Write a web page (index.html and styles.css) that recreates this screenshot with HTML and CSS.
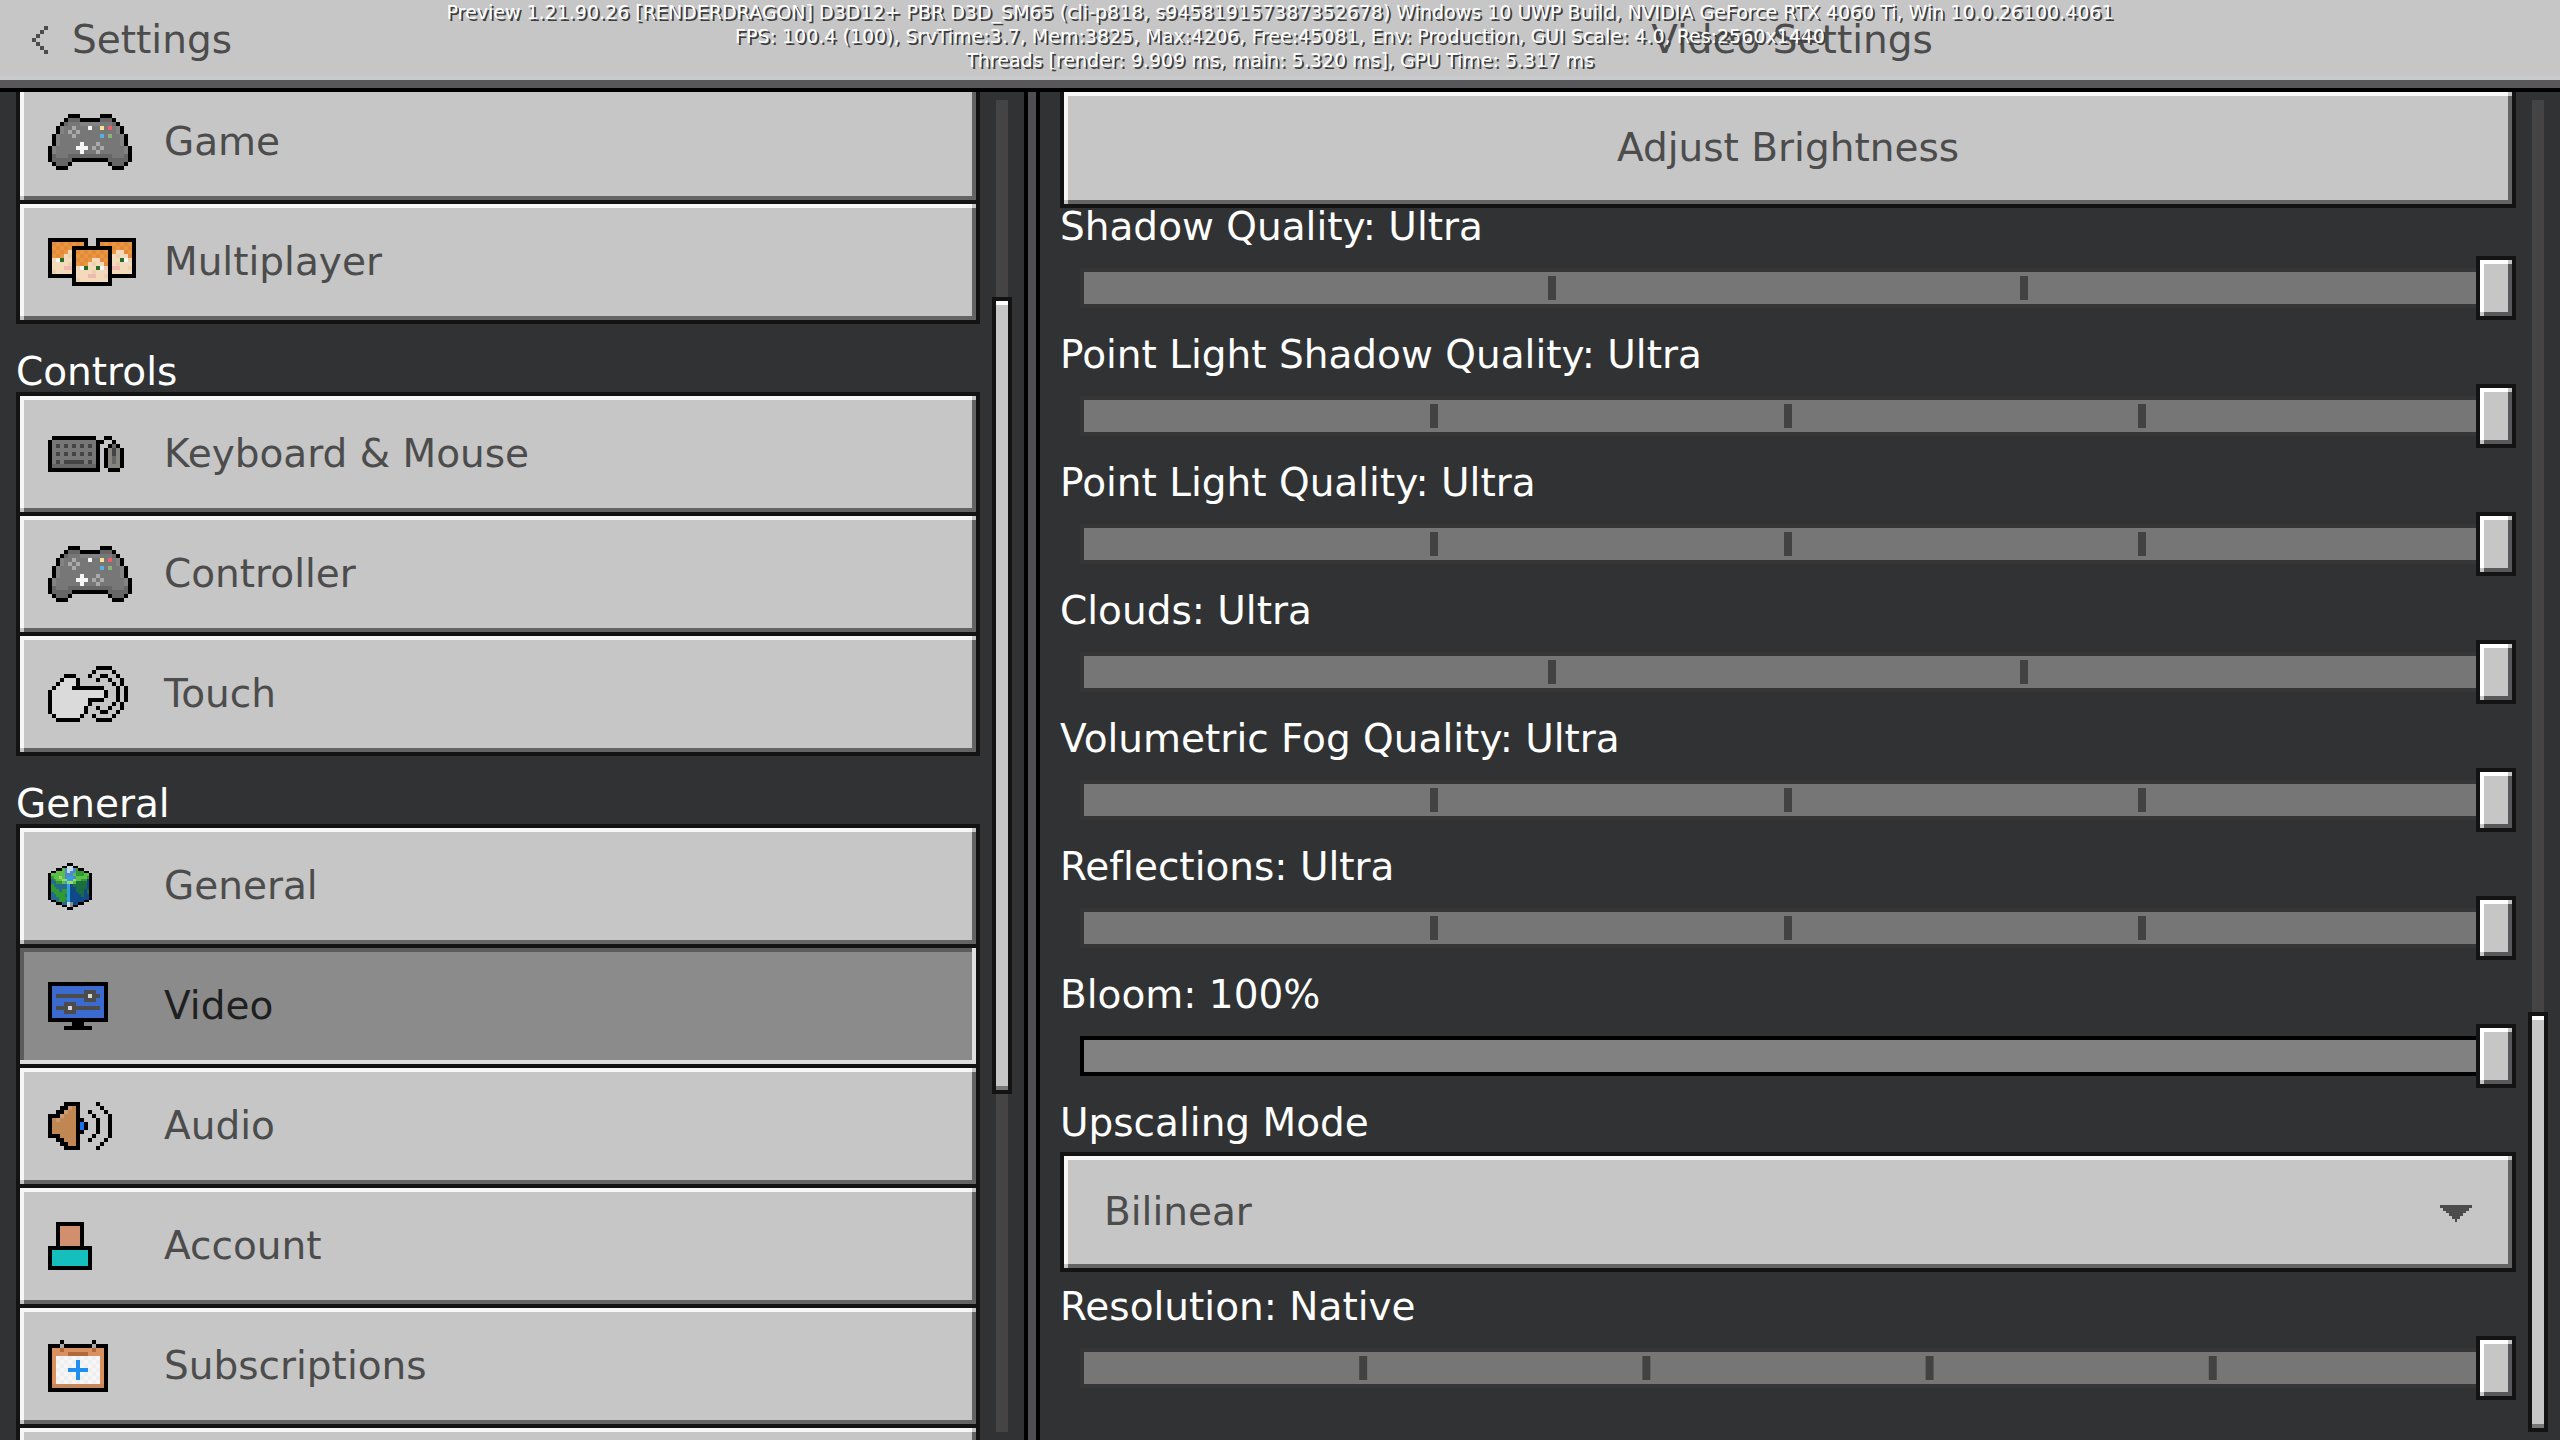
FILE: index.html
```html
<!DOCTYPE html>
<html lang="en">
<head>
    <meta charset="UTF-8">
    <meta name="viewport" content="width=device-width, initial-scale=1.0">
    <title>Video Settings</title>
    <link rel="stylesheet" href="styles.css">
</head>
<body>

    <header class="header">
        <button class="back">
            <svg class="icon" data-icon="back"></svg>
            Settings
        </button>
        <h1 class="title">Video Settings</h1>
    </header>

    <div class="debug">
        <p>Preview 1.21.90.26 [RENDERDRAGON] D3D12+ PBR D3D_SM65 (cli-p818, s945819157387352678) Windows 10 UWP Build, NVIDIA GeForce RTX 4060 Ti, Win 10.0.26100.4061</p>
        <p>FPS: 100.4 (100), SrvTime:3.7, Mem:3825, Max:4206, Free:45081, Env: Production, GUI Scale: 4.0, Res:2560x1440</p>
        <p>Threads [render: 9.909 ms, main: 5.320 ms], GPU Time: 5.317 ms</p>
    </div>

    <main class="main">
        <div class="panel panel-left">
            <nav class="list">
                <button class="item"><svg class="icon" data-icon="gamepad"></svg>Game</button>
                <button class="item"><svg class="icon" data-icon="players"></svg>Multiplayer</button>

                <h2 class="group">Controls</h2>
                <button class="item"><svg class="icon" data-icon="keyboard"></svg>Keyboard &amp; Mouse</button>
                <button class="item"><svg class="icon" data-icon="gamepad"></svg>Controller</button>
                <button class="item"><svg class="icon" data-icon="touch"></svg>Touch</button>

                <h2 class="group">General</h2>
                <button class="item"><svg class="icon" data-icon="globe"></svg>General</button>
                <button class="item selected" aria-current="page"><svg class="icon" data-icon="monitor"></svg>Video</button>
                <button class="item"><svg class="icon" data-icon="speaker"></svg>Audio</button>
                <button class="item"><svg class="icon" data-icon="account"></svg>Account</button>
                <button class="item"><svg class="icon" data-icon="calendar"></svg>Subscriptions</button>
                <button class="item" aria-label="Global Resources"></button>
            </nav>
            <div class="scrollbar"><div class="thumb"></div></div>
        </div>

        <div class="divider"></div>

        <div class="panel panel-right">
            <form class="options">
                <button type="button" class="wide">Adjust Brightness</button>

                <div class="option">
                    <label for="shadow">Shadow Quality: Ultra</label>
                    <div class="slider steps-3"><input type="range" id="shadow" min="0" max="3" value="3"></div>
                </div>
                <div class="option">
                    <label for="point-shadow">Point Light Shadow Quality: Ultra</label>
                    <div class="slider steps-4"><input type="range" id="point-shadow" min="0" max="4" value="4"></div>
                </div>
                <div class="option">
                    <label for="point-light">Point Light Quality: Ultra</label>
                    <div class="slider steps-4"><input type="range" id="point-light" min="0" max="4" value="4"></div>
                </div>
                <div class="option">
                    <label for="clouds">Clouds: Ultra</label>
                    <div class="slider steps-3"><input type="range" id="clouds" min="0" max="3" value="3"></div>
                </div>
                <div class="option">
                    <label for="fog">Volumetric Fog Quality: Ultra</label>
                    <div class="slider steps-4"><input type="range" id="fog" min="0" max="4" value="4"></div>
                </div>
                <div class="option">
                    <label for="reflections">Reflections: Ultra</label>
                    <div class="slider steps-4"><input type="range" id="reflections" min="0" max="4" value="4"></div>
                </div>
                <div class="option">
                    <label for="bloom">Bloom: 100%</label>
                    <div class="slider smooth"><input type="range" id="bloom" min="0" max="100" value="100"></div>
                </div>
                <div class="option">
                    <label for="upscaling">Upscaling Mode</label>
                    <div class="dropdown">
                        <select id="upscaling">
                            <option>Bilinear</option>
                            <option>TAAU</option>
                        </select>
                        <svg class="arrow" viewBox="0 0 32 17" shape-rendering="crispEdges">
                            <path d="M0 0h32v3h-3v3h-3v2h-3v3h-3v3h-3v3h-2v-3h-3v-3h-3v-3h-3v-2h-3v-3h-3z"/>
                        </svg>
                    </div>
                </div>
                <div class="option">
                    <label for="resolution">Resolution: Native</label>
                    <div class="slider steps-5"><input type="range" id="resolution" min="0" max="5" value="5"></div>
                </div>
            </form>
            <div class="scrollbar"><div class="thumb"></div></div>
        </div>
    </main>

    <script src="icons.js"></script>
</body>
</html>
```
FILE: styles.css
```css
* {
    box-sizing: border-box;
}

body {
    margin: 0;
    height: 100vh;
    display: flex;
    flex-direction: column;
    overflow: hidden;
    background: #313233;
    color: #ffffff;
    font-family: "DejaVu Sans", Verdana, sans-serif;
    font-size: 39px;
    font-variant-ligatures: none;
    line-height: 40px;
}

button,
select {
    font: inherit;
    color: #4c4c4c;
    border-radius: 0;
    cursor: pointer;
}

h1,
h2,
p {
    margin: 0;
    font-size: inherit;
    font-weight: normal;
}

/* header */

.header {
    position: relative;
    z-index: 1;
    flex: none;
    display: grid;
    grid-template-columns: 40% 1fr;
    align-items: center;
    height: 92px;
    background: #c6c6c6;
    border-bottom: 4px solid #000000;
    box-shadow: inset 0 -8px #58585a, inset 0 -12px #c8cacb;
    color: #4c4c4c;
    padding-bottom: 8px;
}

.back {
    display: flex;
    align-items: center;
    gap: 24px;
    padding: 0 32px;
    background: none;
    border: none;
}

.title {
    text-align: center;
}

.debug {
    position: absolute;
    z-index: 2;
    top: 0;
    left: 0;
    right: 0;
    text-align: center;
    font-size: 19px;
    line-height: 24px;
    white-space: nowrap;
    text-shadow: 2px 2px #3d3d3d;
    pointer-events: none;
}

/* panels */

.main {
    flex: 1;
    min-height: 0;
    display: flex;
    overflow: hidden;
    margin-top: -12px;
    padding-top: 12px;
}

.panel {
    display: flex;
    gap: 12px;
    min-width: 0;
    padding-right: 12px;
}

.panel-left {
    width: 40%;
    padding-left: 16px;
}

.panel-right {
    flex: 1;
    padding-left: 20px;
}

.divider {
    flex: none;
    width: 16px;
    background: #4f4f51;
    border: solid #000000;
    border-width: 0 4px;
}

.scrollbar {
    position: relative;
    flex: none;
    width: 12px;
    margin: 8px 4px;
    background: #444444;
}

.scrollbar .thumb {
    position: absolute;
    left: -4px;
    right: -4px;
    background: #c6c6c6;
    border: 4px solid #131313;
    box-shadow: inset 0 4px #ffffff, inset 0 -4px #777777;
}

.panel-left .thumb {
    top: 14.8%;
    height: 59.8%;
}

.panel-right .thumb {
    top: 68.5%;
    bottom: 0;
}

/* raised surfaces */

.item,
.wide,
.dropdown select,
.slider input::-webkit-slider-thumb {
    --face: #c6c6c6;
    --corner: #c6c6c6;
    --light: #f7f7f7;
    --dark: #646464;
    border: 4px solid #131313;
    background:
        linear-gradient(var(--corner), var(--corner)) 100% 0 / 4px 4px no-repeat,
        linear-gradient(var(--corner), var(--corner)) 0 100% / 4px 4px no-repeat,
        linear-gradient(var(--light), var(--light)) 0 0 / 100% 4px no-repeat,
        linear-gradient(var(--light), var(--light)) 0 0 / 4px 100% no-repeat,
        linear-gradient(var(--dark), var(--dark)) 0 100% / 100% 4px no-repeat,
        linear-gradient(var(--dark), var(--dark)) 100% 0 / 4px 100% no-repeat,
        var(--face);
}

/* left list */

.list {
    flex: 1;
    min-width: 0;
    margin-top: -12px;
}

.item {
    display: grid;
    grid-template-columns: 116px 1fr;
    align-items: center;
    width: 100%;
    height: 124px;
    padding: 0 28px;
    text-align: left;
}

.item + .item {
    margin-top: -4px;
}

.item.selected {
    --face: #8b8b8b;
    --corner: #dfdfdf;
    --light: #5c5c5c;
    --dark: #dfdfdf;
    color: #1f1f1f;
}

.group {
    padding-top: 28px;
}

.icon {
    flex: none;
    display: block;
}

/* right list */

.options {
    flex: 1;
    min-width: 0;
    margin-top: -4px;
}

.wide {
    display: block;
    width: 100%;
    height: 120px;
}

.option {
    margin-bottom: 16px;
}

.option label {
    display: block;
    line-height: 38px;
    margin-bottom: 10px;
}

.slider {
    position: relative;
    height: 64px;
}

/* the half ticks at both ends stay under the border */
.slider::before {
    content: "";
    position: absolute;
    inset: 12px 20px;
    border: 4px solid #363636;
    background-color: #767676;
    background-image: linear-gradient(90deg, #424242 4px, transparent 4px, transparent calc(100% - 4px), #424242 calc(100% - 4px));
    background-origin: border-box;
    background-repeat: repeat-x;
    background-position: 0 50%;
}

.steps-3::before {
    background-size: calc(100% / 3) 24px;
}

.steps-4::before {
    background-size: calc(100% / 4) 24px;
}

.steps-5::before {
    background-size: calc(100% / 5) 24px;
}

.smooth::before {
    border-color: #000000;
    background: #818181;
}

.slider input {
    position: relative;
    display: block;
    width: 100%;
    height: 64px;
    margin: 0;
    appearance: none;
    background: none;
    cursor: pointer;
}

.slider input::-webkit-slider-thumb {
    --light: #ffffff;
    --dark: #58585a;
    appearance: none;
    width: 40px;
    height: 64px;
}

.dropdown {
    position: relative;
}

.dropdown select {
    display: block;
    width: 100%;
    height: 120px;
    padding: 0 40px;
    appearance: none;
}

.dropdown .arrow {
    position: absolute;
    right: 44px;
    top: 53px;
    width: 32px;
    height: 17px;
    fill: #4c4c4c;
    pointer-events: none;
}
```
FILE: icons.js
```javascript
// one character is one texture pixel, "." is empty
const colors = {
    k: "#000000", g: "#777777", d: "#666666", l: "#848284", x: "#a9a9a9",
    w: "#f6f6f6", y: "#f5e58c", r: "#ee5f73", b: "#58aee6", n: "#8fb27c",
    a: "#444444", m: "#85847e", f: "#dadada", q: "#4c4c4c", B: "#3b6bce",
    W: "#d6d6d6", C: "#1a72f0", h: "#c08752", H: "#cc9a72", t: "#ecd0b0",
    s: "#f2dabb", o: "#e38b3a", O: "#e8963f", e: "#266b26", p: "#efb9ae",
    A: "#d18f6f", T: "#15bfbd", c: "#d9925f", v: "#b0693a", i: "#1f8ff2",
    j: "#efefef", z: "#c6875f"
};

const globeColors = {
    k: "#000000", G: "#5cc046", L: "#9fd86a", n: "#2f9a2f", b: "#4f87d6",
    c: "#2fa2dc", S: "#c5dcdc", x: "#8a8a8a", u: "#27698f", v: "#10498a",
    D: "#1c6c42"
};

const icons = {
    back: [
        "...q",
        "..q.",
        ".q..",
        "q...",
        ".q..",
        "..q.",
        "...q"
    ],
    gamepad: [
        ".....kkk.....kkk.....",
        "....kdddkkkkkdddk....",
        "...kdggglllllgggdk...",
        "..klggxgggwggygrglk..",
        "..klgxgxggggggggglk..",
        ".klgggxggggggbgngglk.",
        ".klggggggggggggggglk.",
        ".klgggggwgggxggggglk.",
        "klgggggwwwgxgxggggglk",
        "klggggggwgggxgggggglk",
        "kdgggdddddddddddgggdk",
        "kdddddkkkkkkkkkdddddk",
        ".kdddk.........kdddk.",
        "..kkk...........kkk.."
    ],
    players: [
        "kkkkkkkkkk..kkkkkkkkkk",
        "koOoOoOoOk..koOoOoOoOk",
        "kOoOoOkkkkkkkkkkoOoOok",
        "koOoOskoOoOoOoOkOssoOk",
        "kOoOstkOoOoOoOokstssok",
        "kswesskoOoOssoOkssewtk",
        "ksssstkOoOstssokstsssk",
        "ksssppkswessewtkppsstk",
        "ktssssksssstsssksssssk",
        "kkkkkkksssppsstkkkkkkk",
        "......ktsssssssk......",
        "......kkkkkkkkkk......"
    ],
    keyboard: [
        ".kkkkkkkkkkk..kk...",
        "kgggggggggggkk..k..",
        "kgagagagagagk..kdk.",
        "kgggggggggggk.kmamk",
        "kgagagagagagk.kmamk",
        "kgggggggggggk.kmdmk",
        "kgagaaaaagagk.kmdmk",
        "kdddddddddddk.kmmmk",
        "kkkkkkkkkkkkk..kkk."
    ],
    touch: [
        "............kkkk....",
        "...........k....k...",
        "....kkk...k..kk..k..",
        "...kfffk....k..k..k.",
        "..kffffk........k.k.",
        ".kffffkkkkkkkk...k.k",
        "kfffffffffffffk..k.k",
        "kfffffffffffffk..k.k",
        "kfffffffffkkkk...k.k",
        "kfffffffffk.....k.k.",
        "kffffffffk..k..k..k.",
        "kffffffffk...kk..k..",
        ".kffffffk..k....k...",
        "..kkkkkk....kkkk...."
    ],
    globe: [
        ".......kk.......",
        ".....kkSSkk.....",
        "...kkGbSSbnkk...",
        ".kkGGGbSbbnnnkk.",
        "kGGGGGbbbGnnnGGk",
        "knGGLGbccbGGGGnk",
        "kunGGLLccLGGnnvk",
        "kuunnGcLLGDDDDvk",
        "knuuuuucvDDDDDvk",
        "knnuuuucvvDDDDvk",
        "knnnunncvvDDDvDk",
        "kunnnnncvvvDDvDk",
        "kuunnnucvvvvDvvk",
        "kuuunnncvvvvvvvk",
        ".kkunnucvvvvvkk.",
        "...kkuuSxvvkk...",
        ".....kkSxkk.....",
        ".......kk......."
    ],
    monitor: [
        "kkkkkkkkkkkkkkk",
        "kBBBBBBBBBBBBBk",
        "kBBBBBBBBqqqBBk",
        "kBqqqqqqqqWqqBk",
        "kBBBBBBBBqqqBBk",
        "kBBBqqqBBBBBBBk",
        "kBqqqWqqqqqqqBk",
        "kBBBqqqBBBBBBBk",
        "kBBBBBBBBBBBBBk",
        "kkkkkkkkkkkkkkk",
        "......kkk......",
        "....kkkkkkk...."
    ],
    speaker: [
        "....kkkk....k...",
        "...kkHhk.....k..",
        "..kkHhhk..k...k.",
        "kkkHhhhk...k...k",
        "khHhhhhkk...k..k",
        "khhhhhhkCk..k..k",
        "khhhhhhkCk..k..k",
        "khhhhhhkk...k..k",
        "kkkhhhhk...k...k",
        "..kkhhhk..k...k.",
        "...kkhhk.....k..",
        "....kkkk....k..."
    ],
    account: [
        "..kkkkkkk..",
        "..kAAAAAk..",
        "..kAAAAAk..",
        "..kAAAAAk..",
        "..kAAAAAk..",
        "..kAAAAAk..",
        "kkkkkkkkkkk",
        "kTTTTTTTTTk",
        "kTTTTTTTTTk",
        "kTTTTTTTTTk",
        "kTTTTTTTTTk",
        "kkkkkkkkkkk"
    ],
    calendar: [
        "...k.......k...",
        "kkkxkkkkkkkxkkk",
        "kccvcccccccvcck",
        "kccccvvvvvcccck",
        "kcwjwjwjwjwjwck",
        "kcjwjwjijwjwjck",
        "kcwjwjwiwjwjwck",
        "kcjwjiiiiijwjck",
        "kcwjwjwiwjwjwck",
        "kcjwjwjijwjwjck",
        "kcwjwjwjwjwjwck",
        "kzzzzzzzzzzzzzk",
        "kkkkkkkkkkkkkkk"
    ]
};

function drawIcon(svg) {
    const name = svg.dataset.icon;
    const rows = icons[name];
    const palette = name === "globe" ? globeColors : colors;
    const width = rows[0].length;
    const height = rows.length;
    let rects = "";

    rows.forEach((row, y) => {
        for (let x = 0; x < row.length; x++) {
            if (row[x] === ".") continue;
            rects += `<rect x="${x}" y="${y}" width="1" height="1" fill="${palette[row[x]]}"/>`;
        }
    });

    svg.setAttribute("viewBox", `0 0 ${width} ${height}`);
    svg.setAttribute("shape-rendering", "crispEdges");
    svg.setAttribute("preserveAspectRatio", "none");
    // the globe texture is finer than the others
    svg.setAttribute("width", name === "globe" ? 44 : width * 4);
    svg.setAttribute("height", name === "globe" ? 47 : height * 4);
    svg.innerHTML = rects;
}

document.querySelectorAll("[data-icon]").forEach(drawIcon);
```
